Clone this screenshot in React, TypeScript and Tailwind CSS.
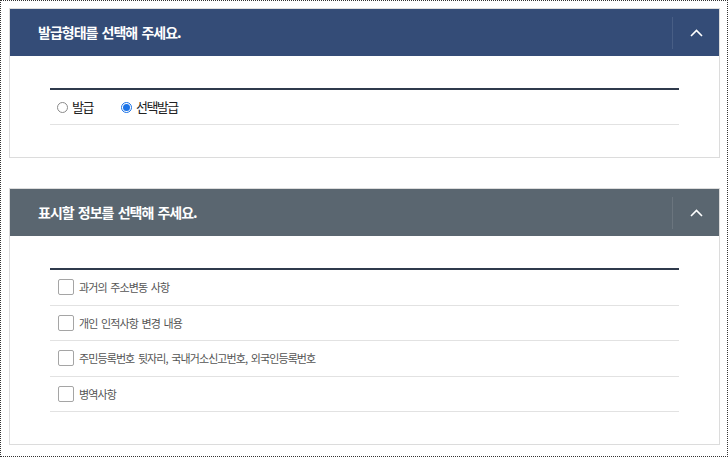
import React from "react";

const font = { fontFamily: '"Noto Sans CJK KR", "Noto Sans", sans-serif' };

function Chevron() {
  return (
    <svg width="13" height="8" viewBox="0 0 13 8" fill="none">
      <path d="M1 7 L6.5 1.5 L12 7" stroke="#ffffff" strokeWidth="1.6" />
    </svg>
  );
}

function Header({ title, bg }: { title: string; bg: string }) {
  return (
    <div className={`flex h-[47px] items-center ${bg}`}>
      <div className="flex-1 pl-[28px] text-[14px] font-bold tracking-[-1px] [word-spacing:2px] text-white">{title}</div>
      <div className="h-[32px] w-px bg-white/10" />
      <div className="flex w-[46px] items-center justify-center">
        <Chevron />
      </div>
    </div>
  );
}

function Radio({ checked, label }: { checked?: boolean; label: string }) {
  return (
    <div className="flex items-center gap-[4px]">
      {checked ? (
        <span className="flex h-[11px] w-[11px] items-center justify-center rounded-full border border-[#1a73e8] bg-white">
          <span className="h-[7px] w-[7px] rounded-full bg-[#1a73e8]" />
        </span>
      ) : (
        <span className="h-[11px] w-[11px] rounded-full border border-[#8a8a8a] bg-white" />
      )}
      <span className="text-[13px] tracking-[-1.5px] text-[#222]">{label}</span>
    </div>
  );
}

function CheckRow({ label }: { label: string }) {
  return (
    <div className="flex h-[35.5px] items-center border-b border-[#e2e2e2] pl-[8px]">
      <span className="h-[16px] w-[16px] rounded-[2px] border border-[#a5a5a5] bg-white" />
      <span className="ml-[5px] text-[11px] tracking-[-0.9px] [word-spacing:2px] text-[#555]">{label}</span>
    </div>
  );
}

export default function App() {
  return (
    <div style={font} className="h-[457px] w-[728px] border border-dotted border-[#333] bg-white pl-[8px] pr-[7px] pt-[7px]">
      <div className="border border-[#dcdcdc]">
        <Header title="발급형태를 선택해 주세요." bg="bg-[#344c77]" />
        <div className="px-[40px] pb-[32px] pt-[32px]">
          <div className="border-t-2 border-[#2f3a4c]">
            <div className="flex h-[35px] items-center gap-[28px] border-b border-[#e2e2e2] pl-[7px]">
              <Radio label="발급" />
              <Radio checked label="선택발급" />
            </div>
          </div>
        </div>
      </div>
      <div className="mt-[30px] border border-[#dcdcdc]">
        <Header title="표시할 정보를 선택해 주세요." bg="bg-[#5a6670]" />
        <div className="px-[40px] pb-[32px] pt-[32px]">
          <div className="border-t-2 border-[#2f3a4c]">
            <CheckRow label="과거의 주소변동 사항" />
            <CheckRow label="개인 인적사항 변경 내용" />
            <CheckRow label="주민등록번호 뒷자리, 국내거소신고번호, 외국인등록번호" />
            <CheckRow label="병역사항" />
          </div>
        </div>
      </div>
    </div>
  );
}
